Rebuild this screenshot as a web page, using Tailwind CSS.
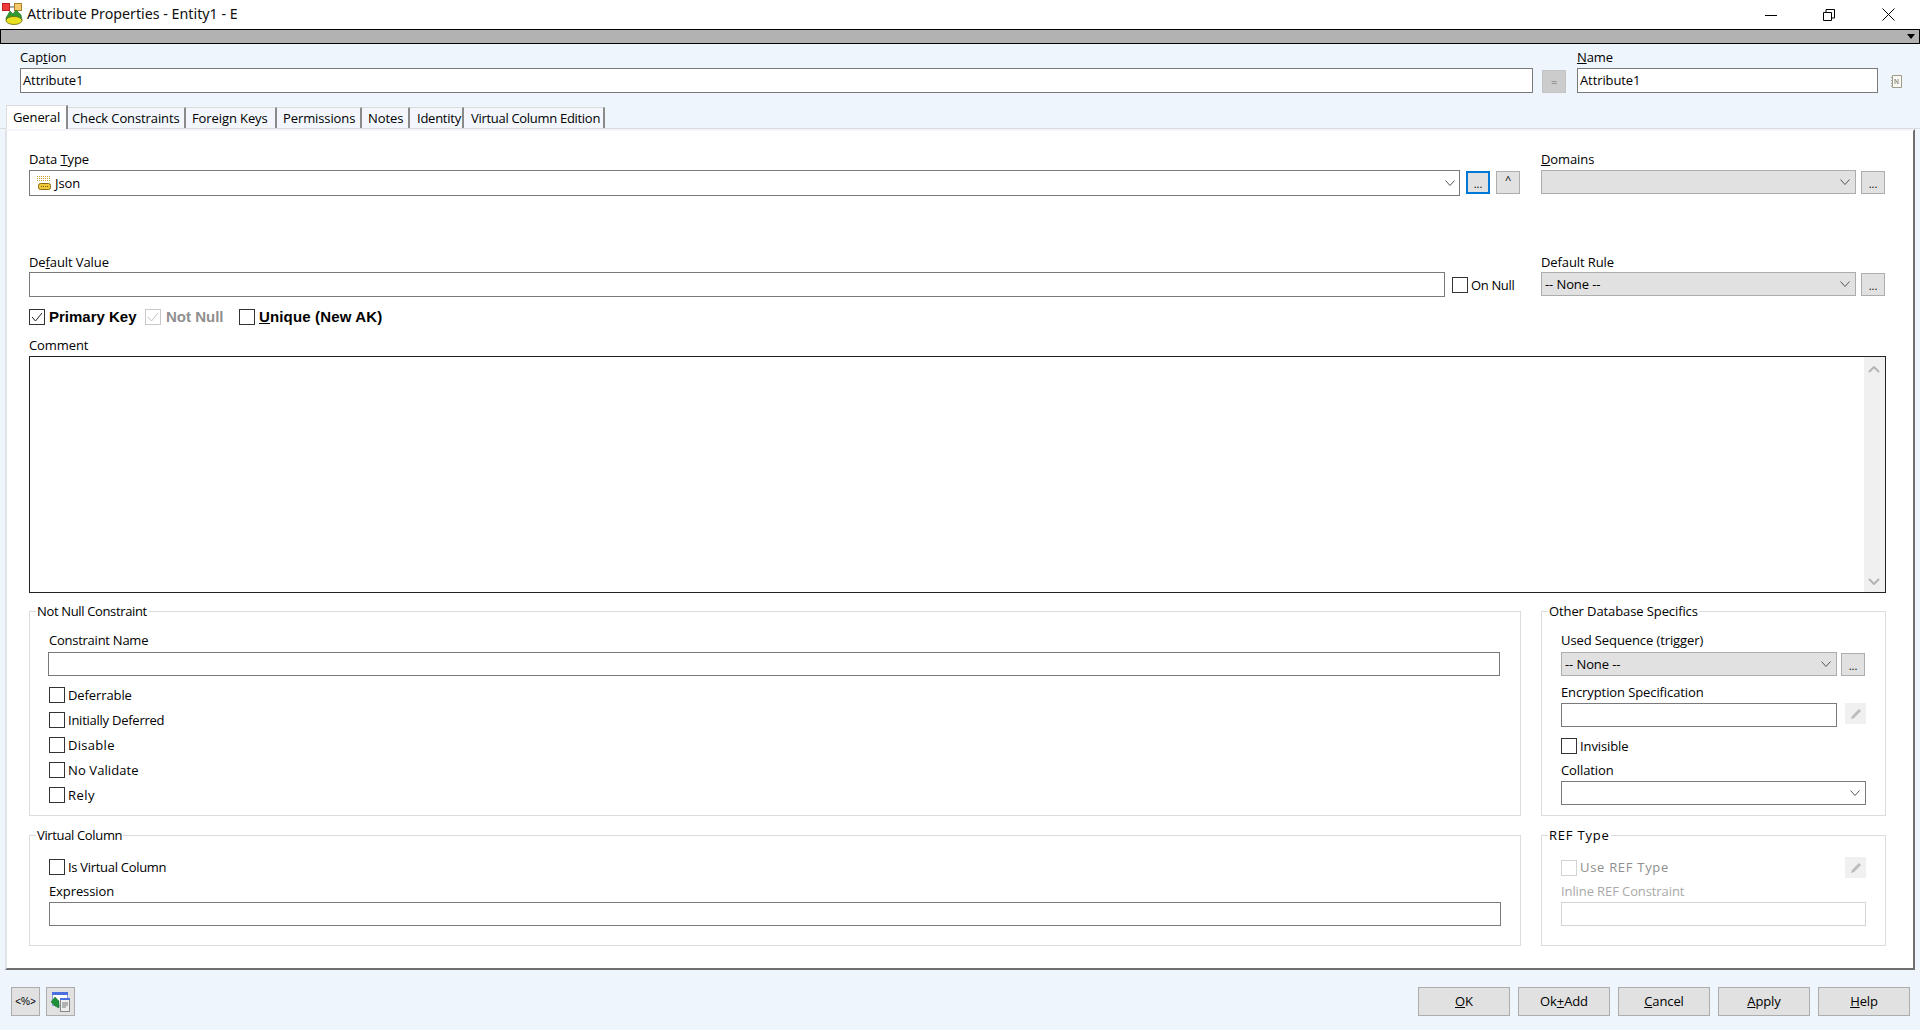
<!DOCTYPE html>
<html><head><meta charset="utf-8"><script src="https://cdn.jsdelivr.net/npm/@tailwindcss/browser@4"></script></head>
<body class="m-0">
<div class="w-[1920px] h-[1030px] flex flex-col bg-[#eff5fd] overflow-hidden text-black font-['Open_Sans','Liberation_Sans',sans-serif] text-[13px] leading-[16px] tracking-[-0.1px]">
  <!-- Title bar -->
  <div class="h-[29px] bg-white flex items-center shrink-0">
    <svg class="ml-[2px] mt-[-1px]" width="21" height="22" viewBox="0 0 21 22"><path d="M7 4h7" stroke="#555"/><rect x="0.5" y="0.5" width="7" height="7" fill="#ee3b3b" stroke="#c02020"/><rect x="12.5" y="0.5" width="7" height="7" fill="#f5c96a" stroke="#a8842c"/><path d="M4 15 L8 8 L11 11 L14 7 L19 12 L20 17 L4 17Z" fill="#2f9a2f" stroke="#1e6a1e" stroke-width=".6"/><ellipse cx="12" cy="17.5" rx="8" ry="4" fill="#e8e020" stroke="#6b6b10" stroke-width=".8"/></svg>
    <span class="ml-[4px] mt-[-1px] text-[14.25px] tracking-normal font-['Noto_Sans',sans-serif] text-[#111]">Attribute Properties - Entity1 - E</span>
    <div class="ml-auto flex items-center">
      <svg width="12" height="12" viewBox="0 0 12 12" class="mr-[46px]"><path d="M0 6.5H12" stroke="#000"/></svg>
      <svg width="12" height="12" viewBox="0 0 12 12" class="mr-[47px]"><path d="M.5 3.5h8v8h-8zM3 3V.5h8.5V9H9" fill="none" stroke="#000"/></svg>
      <svg width="13" height="13" viewBox="0 0 13 13" class="mr-[25px]"><path d="M.5.5l12 12M12.5.5l-12 12" stroke="#000" fill="none"/></svg>
    </div>
  </div>
  <!-- Gray strip -->
  <div class="h-[15px] shrink-0 border border-black bg-[#b2b2b2] flex justify-end items-center pr-[4px]">
    <svg width="8" height="5" viewBox="0 0 8 5"><path d="M0 0h8L4 5z" fill="#000"/></svg>
  </div>
  <!-- Caption / Name -->
  <div class="h-[62px] shrink-0 flex pl-[20px]">
    <div class="w-[1513px] pt-[5px]">
      <div class="h-[19px]">Cap<u>t</u>ion</div>
      <div class="h-[25px] border border-[#7a7a7a] bg-white px-[2px] leading-[23px]">Attribute1</div>
    </div>
    <div class="w-[24px] h-[23px] ml-[9px] mt-[26px] bg-[#cccccc] border border-[#c4c4c4] flex items-center justify-center text-[11px] text-[#666]">=</div>
    <div class="w-[301px] ml-[11px] pt-[5px]">
      <div class="h-[19px]"><u>N</u>ame</div>
      <div class="h-[25px] border border-[#7a7a7a] bg-white px-[2px] leading-[23px]">Attribute1</div>
    </div>
    <svg class="ml-[13px] mt-[31px]" width="11" height="13" viewBox="0 0 11 13"><path d="M1.5.5h9v12h-9z" fill="#f8f8f4" stroke="#a09c88"/><path d="M4 9V4l3 5V4" fill="none" stroke="#999484"/><path d="M0 2.5h2M0 5.5h2M0 8.5h2M0 11h2" stroke="#a09c88"/></svg>
  </div>
  <!-- Tabs -->
  <div class="h-[23px] shrink-0 flex items-end pl-[6px] border-b border-[#dcdcdc] whitespace-nowrap">
    <div class="w-[62px] h-[24px] bg-white border-l border-t border-[#dcdcdc] border-r-2 border-r-[#8a8a8a] pl-[6px] pt-[3px] -mb-px relative">General</div>
    <div class="w-[118px] h-[21px] bg-[#f3f7fd] border-t border-[#dcdcdc] border-r-2 border-r-[#8a8a8a] pl-[4px] pt-[2px]">Check Constraints</div>
    <div class="w-[91px] h-[21px] bg-[#f3f7fd] border-t border-[#dcdcdc] border-r-2 border-r-[#8a8a8a] pl-[6px] pt-[2px]">Foreign Keys</div>
    <div class="w-[85px] h-[21px] bg-[#f3f7fd] border-t border-[#dcdcdc] border-r-2 border-r-[#8a8a8a] pl-[6px] pt-[2px]">Permissions</div>
    <div class="w-[48px] h-[21px] bg-[#f3f7fd] border-t border-[#dcdcdc] border-r-2 border-r-[#8a8a8a] pl-[6px] pt-[2px]">Notes</div>
    <div class="w-[54px] h-[21px] bg-[#f3f7fd] border-t border-[#dcdcdc] border-r-2 border-r-[#8a8a8a] pl-[7px] pt-[2px] tracking-[-0.25px]">Identity</div>
    <div class="w-[141px] h-[21px] bg-[#f3f7fd] border-t border-[#dcdcdc] border-r-2 border-r-[#8a8a8a] pl-[7px] pt-[2px] tracking-[-0.3px]">Virtual Column Edition</div>
  </div>
  <!-- Panel -->
  <div class="h-[841px] w-[1910px] ml-[5px] shrink-0 bg-white border-t-2 border-t-[#f3f6fb] border-l-2 border-l-[#dfe3e8] border-r-2 border-r-[#6e6e6e] border-b-2 border-b-[#6e6e6e] pl-[22px] flex flex-col">
    <!-- Row 1 -->
    <div class="flex h-[124px] shrink-0 pt-[20px]">
      <div class="w-[1492px]">
        <div class="h-[19px]">Data <u>T</u>ype</div>
        <div class="flex">
          <div class="w-[1431px] h-[26px] border border-[#7a7a7a] flex items-center pl-[7px] pr-[4px]">
            <svg width="14" height="16" viewBox="0 0 14 16"><path d="M0 1.5h13M0 3.5h13M0 5.5h13" stroke="#c9a227" stroke-dasharray="1 1"/><rect x="1.5" y="8.5" width="12" height="6" rx="2" fill="#f0c93a" stroke="#8a6a10"/><path d="M4 11.5h8" stroke="#7a5a10" stroke-dasharray="1 1"/></svg>
            <span class="ml-[4px]">Json</span>
            <svg class="ml-auto" width="10" height="6" viewBox="0 0 10 6"><path d="M.5.5l4.5 5 4.5-5" fill="none" stroke="#555"/></svg>
          </div>
          <div class="w-[24px] h-[23px] ml-[6px] mt-px bg-[#e1e1e1] border-2 border-[#0078d7] text-center text-[11px] leading-[22px]">...</div>
          <div class="w-[24px] h-[23px] ml-[6px] mt-px bg-[#e1e1e1] border border-[#adadad] text-center text-[11px] leading-[16px]">^</div>
        </div>
      </div>
      <div class="ml-[20px]">
        <div class="h-[19px]"><u>D</u>omains</div>
        <div class="flex">
          <div class="w-[315px] h-[24px] border border-[#adadad] bg-[#e1e1e1] flex items-center justify-end pr-[5px]"><svg width="10" height="6" viewBox="0 0 10 6"><path d="M.5.5l4.5 5 4.5-5" fill="none" stroke="#555"/></svg></div>
          <div class="w-[24px] h-[23px] ml-[5px] mt-px bg-[#e1e1e1] border border-[#adadad] text-center text-[11px] leading-[24px]">...</div>
        </div>
      </div>
    </div>
    <!-- Row 2 -->
    <div class="flex h-[50px] shrink-0">
      <div class="w-[1492px]">
        <div class="h-[18px] mt-[-1px]">De<u>f</u>ault Value</div>
        <div class="flex">
          <div class="w-[1416px] h-[25px] border border-[#7a7a7a]"></div>
          <div class="ml-[7px] mt-[5px] w-[16px] h-[16px] border border-[#333]"></div>
          <span class="ml-[3px] mt-[5px] tracking-[-0.35px]">On Null</span>
        </div>
      </div>
      <div class="ml-[20px]">
        <div class="h-[18px] mt-[-1px]">Default Rule</div>
        <div class="flex">
          <div class="w-[315px] h-[24px] border border-[#adadad] bg-[#e1e1e1] flex items-center pl-[3px] pr-[5px]"><span>-- None --</span><svg class="ml-auto" width="10" height="6" viewBox="0 0 10 6"><path d="M.5.5l4.5 5 4.5-5" fill="none" stroke="#555"/></svg></div>
          <div class="w-[24px] h-[23px] ml-[5px] mt-px bg-[#e1e1e1] border border-[#adadad] text-center text-[11px] leading-[24px]">...</div>
        </div>
      </div>
    </div>
    <!-- Checks -->
    <div class="flex items-center h-[20px] shrink-0 mt-[2px] font-bold font-['Liberation_Sans',sans-serif] text-[15px] tracking-normal">
      <div class="w-[16px] h-[16px] border border-[#333] flex items-center justify-center"><svg width="12" height="10" viewBox="0 0 12 10"><path d="M1 5l3.5 4L11 1" fill="none" stroke="#222"/></svg></div>
      <span class="ml-[4px] w-[96px]">Primary Key</span>
      <div class="w-[16px] h-[16px] border border-[#c8c8c8] flex items-center justify-center"><svg width="12" height="10" viewBox="0 0 12 10"><path d="M1 5l3.5 4L11 1" fill="none" stroke="#c4c4c4"/></svg></div>
      <span class="ml-[5px] w-[73px] text-[#8f8f8f]">Not Null</span>
      <div class="w-[16px] h-[16px] border border-[#333]"></div>
      <span class="ml-[4px] tracking-[0.15px]"><u>U</u>nique (New AK)</span>
    </div>
    <!-- Comment -->
    <div class="mt-[10px] h-[19px] shrink-0">Comment</div>
    <div class="w-[1857px] h-[237px] shrink-0 border border-[#222] flex justify-end">
      <div class="w-[21px] h-full bg-[#f0f0f0] flex flex-col items-center justify-between pt-[9px] pb-[7px] pr-[2px]">
        <svg width="12" height="7" viewBox="0 0 12 7"><path d="M1 6l5-5 5 5" fill="none" stroke="#b4b4b4" stroke-width="2"/></svg>
        <svg width="12" height="7" viewBox="0 0 12 7"><path d="M1 1l5 5 5-5" fill="none" stroke="#b4b4b4" stroke-width="2"/></svg>
      </div>
    </div>
    <!-- Groups row 1 -->
    <div class="flex mt-[10px] shrink-0">
      <fieldset class="w-[1492px] h-[213px] border border-[#dcdcdc] px-[19px]">
        <legend class="-ml-[13px] px-px leading-[16px] tracking-[-0.35px]">Not Null Constraint</legend>
        <div class="mt-[13px] h-[20px] tracking-[-0.25px]">Constraint Name</div>
        <div class="w-[1452px] -ml-px h-[24px] border border-[#7a7a7a]"></div>
        <div class="mt-[11px] flex flex-col gap-[9px]">
          <div class="flex items-center h-[16px]"><div class="w-[16px] h-[16px] border border-[#333]"></div><span class="ml-[3px]">Deferrable</span></div>
          <div class="flex items-center h-[16px]"><div class="w-[16px] h-[16px] border border-[#333]"></div><span class="ml-[3px] tracking-[-0.25px]">Initially Deferred</span></div>
          <div class="flex items-center h-[16px]"><div class="w-[16px] h-[16px] border border-[#333]"></div><span class="ml-[3px] tracking-[0.3px]">Disable</span></div>
          <div class="flex items-center h-[16px]"><div class="w-[16px] h-[16px] border border-[#333]"></div><span class="ml-[3px] tracking-[0.1px]">No Validate</span></div>
          <div class="flex items-center h-[16px]"><div class="w-[16px] h-[16px] border border-[#333]"></div><span class="ml-[3px] tracking-[0.5px]">Rely</span></div>
        </div>
      </fieldset>
      <fieldset class="w-[345px] h-[213px] ml-[20px] border border-[#dcdcdc] px-[19px]">
        <legend class="-ml-[13px] px-px leading-[16px]">Other Database Specifics</legend>
        <div class="mt-[13px] h-[20px]">Used Sequence (trigger)</div>
        <div class="flex">
          <div class="w-[276px] h-[24px] border border-[#adadad] bg-[#e1e1e1] flex items-center pl-[3px] pr-[5px]"><span>-- None --</span><svg class="ml-auto" width="10" height="6" viewBox="0 0 10 6"><path d="M.5.5l4.5 5 4.5-5" fill="none" stroke="#555"/></svg></div>
          <div class="w-[24px] h-[23px] ml-[4px] mt-px bg-[#e1e1e1] border border-[#adadad] text-center text-[11px] leading-[24px]">...</div>
        </div>
        <div class="mt-[8px] h-[19px]">Encryption Specification</div>
        <div class="flex">
          <div class="w-[276px] h-[24px] border border-[#7a7a7a]"></div>
          <div class="w-[21px] h-[21px] ml-[8px] bg-[#f0f0f0] flex items-center justify-center"><svg width="12" height="12" viewBox="0 0 12 12"><path d="M2.5 9.5L10 2" stroke="#bdbdbd" stroke-width="3"/><path d="M1 11l1-2 1 1z" fill="#999"/></svg></div>
        </div>
        <div class="mt-[11px] flex items-center h-[16px]"><div class="w-[16px] h-[16px] border border-[#333]"></div><span class="ml-[3px]">Invisible</span></div>
        <div class="mt-[8px] h-[19px]">Collation</div>
        <div class="w-[305px] h-[24px] border border-[#7a7a7a] flex items-center justify-end pr-[5px]"><svg width="10" height="6" viewBox="0 0 10 6"><path d="M.5.5l4.5 5 4.5-5" fill="none" stroke="#555"/></svg></div>
      </fieldset>
    </div>
    <!-- Groups row 2 -->
    <div class="flex mt-[11px] shrink-0">
      <fieldset class="w-[1492px] h-[119px] border border-[#dcdcdc] px-[19px]">
        <legend class="-ml-[13px] px-px leading-[16px] tracking-[-0.35px]">Virtual Column</legend>
        <div class="mt-[16px] flex items-center h-[16px]"><div class="w-[16px] h-[16px] border border-[#333]"></div><span class="ml-[3px] tracking-[-0.3px]">Is Virtual Column</span></div>
        <div class="mt-[8px] h-[19px]">Expression</div>
        <div class="w-[1452px] h-[24px] border border-[#7a7a7a]"></div>
      </fieldset>
      <fieldset class="w-[345px] h-[119px] ml-[20px] border border-[#dcdcdc] px-[19px]">
        <legend class="-ml-[13px] px-px leading-[16px] tracking-[0.8px]">REF Type</legend>
        <div class="mt-[14px] flex items-center h-[21px]"><div class="w-[16px] h-[16px] border border-[#d4d4d4]"></div><span class="ml-[3px] mb-[2px] text-[#8f8f8f] tracking-[0.7px]">Use REF Type</span>
          <div class="w-[21px] h-[21px] ml-auto bg-[#f0f0f0] flex items-center justify-center"><svg width="12" height="12" viewBox="0 0 12 12"><path d="M2.5 9.5L10 2" stroke="#bdbdbd" stroke-width="3"/><path d="M1 11l1-2 1 1z" fill="#999"/></svg></div>
        </div>
        <div class="mt-[5px] h-[19px] text-[#a9a9a9]">Inline REF Constraint</div>
        <div class="w-[305px] h-[24px] border border-[#d4d4d4]"></div>
      </fieldset>
    </div>
  </div>
  <!-- Footer -->
  <div class="flex pt-[17px] pl-[11px] pr-[10px]">
    <div class="w-[29px] h-[29px] border border-[#adadad] bg-[#e1e1e1] flex items-center justify-center"><span class="text-[10px] leading-none font-['Liberation_Sans',sans-serif] tracking-normal">&lt;%&gt;</span></div>
    <div class="w-[29px] h-[29px] ml-[6px] border border-[#adadad] bg-[#e1e1e1] flex items-center justify-center">
      <svg width="21" height="20" viewBox="0 0 21 20"><rect x="2.5" y=".5" width="15" height="13" fill="#fff" stroke="#8aa0d8"/><rect x="2" y="0" width="16" height="3" fill="#4a70e0"/><rect x="10.5" y="6.5" width="9" height="13" fill="#eee" stroke="#888"/><rect x="10" y="6" width="10" height="2" fill="#4a70e0"/><path d="M12 11h6M12 13h6M12 15h4" stroke="#777"/><path d="M5 5l4 4v7L5 14 1 10z" fill="#1f8f3a" stroke="#146a28" stroke-width=".5"/></svg>
    </div>
    <div class="ml-auto flex gap-[8px]">
      <div class="w-[92px] h-[29px] border border-[#adadad] bg-[#e1e1e1] text-center leading-[27px]"><u>O</u>K</div>
      <div class="w-[92px] h-[29px] border border-[#adadad] bg-[#e1e1e1] text-center leading-[27px]">Ok<u>+</u>Add</div>
      <div class="w-[92px] h-[29px] border border-[#adadad] bg-[#e1e1e1] text-center leading-[27px]"><u>C</u>ancel</div>
      <div class="w-[92px] h-[29px] border border-[#adadad] bg-[#e1e1e1] text-center leading-[27px]"><u>A</u>pply</div>
      <div class="w-[92px] h-[29px] border border-[#adadad] bg-[#e1e1e1] text-center leading-[27px]"><u>H</u>elp</div>
    </div>
  </div>
</div>
</body></html>
